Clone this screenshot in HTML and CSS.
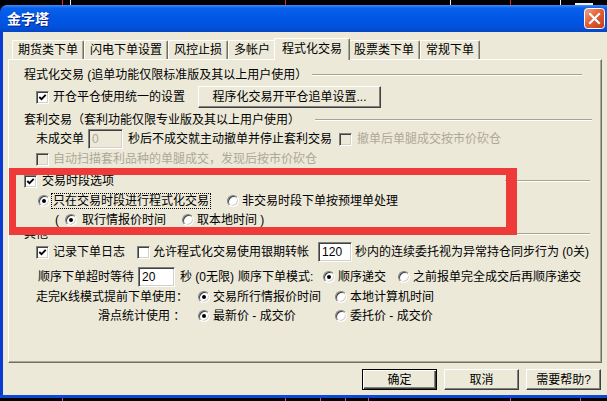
FILE: index.html
```html
<!DOCTYPE html>
<html lang="zh-CN">
<head>
    <meta charset="UTF-8">
    <title>金字塔</title>
    <link rel="stylesheet" href="styles.css">
</head>
<body>
    <div class="desk desk-top">
        <i class="mark mk-red mk-a"></i>
        <i class="mark mk-white mk-b"></i>
        <i class="mark mk-red mk-c"></i>
        <i class="mark mk-white mk-d"></i>
        <i class="mark mk-red mk-e"></i>
        <i class="mark mk-white mk-f"></i>
        <i class="bar-white"></i>
    </div>

    <div class="window">
        <div class="titlebar">
            <span class="title">金字塔</span>
            <span class="close">
                <svg width="21" height="21" viewBox="0 0 21 21">
                    <defs>
                        <linearGradient id="closeFill" x1="0" y1="0" x2="1" y2="1">
                            <stop offset="0" stop-color="#F2A98E"/>
                            <stop offset="0.45" stop-color="#E2603A"/>
                            <stop offset="1" stop-color="#C23C18"/>
                        </linearGradient>
                    </defs>
                    <rect x="0.5" y="0.5" width="20" height="20" rx="3" fill="url(#closeFill)" stroke="#fff"/>
                    <path d="M6 6 L15 15 M15 6 L6 15" stroke="#fff" stroke-width="2.2" stroke-linecap="square"/>
                </svg>
            </span>
        </div>

        <div class="client">
            <div class="tabs">
                <span class="tab">期货类下单</span>
                <span class="tab">闪电下单设置</span>
                <span class="tab">风控止损</span>
                <span class="tab">多帐户</span>
                <span class="tab active">程式化交易</span>
                <span class="tab">股票类下单</span>
                <span class="tab">常规下单</span>
            </div>

            <div class="panel">
                <!-- 程式化交易 -->
                <div class="grp r1">
                    <span>程式化交易 (追单功能仅限标准版及其以上用户使用）</span>
                    <i class="etch ml5 end19"></i>
                </div>
                <div class="row r2">
                    <span class="cb ml12"><svg width="9" height="9" viewBox="0 0 9 9"><path d="M1.3 4 L3.5 6.2 L7.7 1.8" fill="none" stroke="#000" stroke-width="1.8"/></svg></span>
                    <span class="ml4">开仓平仓使用统一的设置</span>
                    <span class="btn setup ml13">程序化交易开平仓追单设置...</span>
                </div>

                <!-- 套利交易 -->
                <div class="grp r3">
                    <span>套利交易（套利功能仅限专业版及其以上用户使用）</span>
                    <i class="etch ml15 end9"></i>
                </div>
                <div class="row r4">
                    <span class="ml12">未成交单</span>
                    <span class="field off ml4 w35">0</span>
                    <span class="ml5">秒后不成交就主动撤单并停止套利交易</span>
                    <span class="cb off ml7"></span>
                    <span class="gray ml5">撤单后单腿成交按市价砍仓</span>
                </div>
                <div class="row r5">
                    <span class="cb off ml12"></span>
                    <span class="gray ml4">自动扫描套利品种的单腿成交，发现后按市价砍仓</span>
                </div>

                <!-- 交易时段 -->
                <div class="grp r6">
                    <span class="cb"><svg width="9" height="9" viewBox="0 0 9 9"><path d="M1.3 4 L3.5 6.2 L7.7 1.8" fill="none" stroke="#000" stroke-width="1.8"/></svg></span>
                    <span class="ml5">交易时段选项</span>
                    <i class="etch late end11"></i>
                </div>
                <div class="row r7">
                    <span class="rd on ml14"></span>
                    <span class="focus ml2">只在交易时段进行程式化交易</span>
                    <span class="rd ml17"></span>
                    <span class="ml3">非交易时段下单按预埋单处理</span>
                </div>
                <div class="row r8">
                    <span class="ml31">(</span>
                    <span class="rd on ml6"></span>
                    <span class="ml5">取行情报价时间</span>
                    <span class="rd ml16"></span>
                    <span class="ml3">取本地时间 )</span>
                </div>

                <!-- 其他 -->
                <div class="grp r9">
                    <span>其他</span>
                    <i class="etch ml5 end11"></i>
                </div>
                <div class="row r10">
                    <span class="cb ml12"><svg width="9" height="9" viewBox="0 0 9 9"><path d="M1.3 4 L3.5 6.2 L7.7 1.8" fill="none" stroke="#000" stroke-width="1.8"/></svg></span>
                    <span class="ml4">记录下单日志</span>
                    <span class="cb ml12"></span>
                    <span class="ml3">允许程式化交易使用银期转帐</span>
                    <span class="field ml9 w34">120</span>
                    <span class="ml3">秒内的连续委托视为异常持仓同步行为 (0关)</span>
                </div>
                <div class="row r11">
                    <span class="ml14">顺序下单超时等待</span>
                    <span class="field ml4 w37">20</span>
                    <span class="sec ml5">秒 (0无限)</span>
                    <span class="mode">顺序下单模式:</span>
                    <span class="rd on"></span>
                    <span class="ml3">顺序递交</span>
                    <span class="rd ml12"></span>
                    <span class="ml3">之前报单完全成交后再顺序递交</span>
                </div>
                <div class="opts r12">
                    <span class="ml12">走完K线模式提前下单使用：</span>
                    <span class="opt"><span class="rd on"></span><span class="ml3">交易所行情报价时间</span></span>
                    <span class="opt"><span class="rd"></span><span class="ml3">本地计算机时间</span></span>
                </div>
                <div class="opts r13">
                    <span class="ml74">滑点统计使用 ：</span>
                    <span class="opt"><span class="rd on"></span><span class="ml3">最新价 - 成交价</span></span>
                    <span class="opt"><span class="rd"></span><span class="ml3">委托价 - 成交价</span></span>
                </div>

                <div class="note-box"></div>
            </div>

            <div class="actions">
                <span class="btn action default">确定</span>
                <span class="btn action">取消</span>
                <span class="btn action">需要帮助?</span>
            </div>
        </div>
        <div class="frame-bottom"></div>
    </div>

    <div class="desk desk-bottom">
        <i class="mark mk-pink mk-a"></i>
        <i class="mark mk-pink mk-c"></i>
        <i class="mark mk-pink mk-g"></i>
        <i class="mark mk-pink mk-h"></i>
        <i class="mark mk-pink mk-i"></i>
        <i class="mark mk-pink mk-e"></i>
        <i class="mark mk-pink mk-j"></i>
    </div>
</body>
</html>
```

FILE: styles.css
```css
* {
    box-sizing: border-box;
}

body {
    margin: 0;
    width: 607px;
    height: 401px;
    overflow: hidden;
    background: #000;
    font-family: "Liberation Sans", "Noto Sans CJK SC", sans-serif;
    font-size: 12px;
    line-height: 14px;
    color: #000;
}

/* chart behind the dialog */
.desk {
    position: relative;
    background: #000;
}
.desk-top {
    height: 5px;
}
.desk-bottom {
    height: 3px;
}
.mark {
    position: absolute;
    top: 0;
    width: 1px;
    height: 100%;
}
.mk-red { background: #e02828; }
.mk-white { background: #f0f0f0; }
.mk-pink { background: #d040d0; }
.mk-a { left: 62px; }
.mk-b { left: 70px; }
.mk-c { left: 285px; }
.mk-d { left: 450px; }
.mk-e { left: 510px; }
.mk-f { left: 560px; }
.mk-g { left: 320px; }
.mk-h { left: 345px; }
.mk-i { left: 368px; }
.mk-j { left: 580px; }
.bar-white {
    position: absolute;
    left: 575px;
    top: 3px;
    width: 18px;
    height: 2px;
    background: #f0f0f0;
}

/* window */
.window {
    height: 393px;
    display: flex;
    flex-direction: column;
}

.titlebar {
    height: 27px;
    display: flex;
    align-items: center;
    padding-left: 7px;
    border-radius: 7px 0 0 0;
    background: linear-gradient(#3C8EF8 0, #0B60EB 3px, #0058E6 45%, #0052DC 80%, #0446C6 100%);
}
.title {
    color: #fff;
    font-weight: bold;
    font-size: 14px;
    text-shadow: 1px 1px #0A1E8A;
}
.close {
    display: flex;
    margin-left: auto;
    margin-right: 2px;
}

.client {
    flex: 1;
    display: flex;
    flex-direction: column;
    background: #ECE9D8;
    border-left: 3px solid #0B3BD5;
    padding-left: 5px;
}
.frame-bottom {
    height: 3px;
    background: #0C47D6;
}

/* tabs */
.tabs {
    display: flex;
    align-items: flex-end;
    height: 21px;
    margin-top: 6px;
    padding-left: 4px;
}
.tab {
    height: 19px;
    padding: 0 5px;
    line-height: 18px;
    white-space: nowrap;
    border: 1px solid #fff;
    border-bottom: 0;
    border-right-color: #716F64;
    box-shadow: inset -1px 0 #ACA899;
    border-radius: 2px 2px 0 0;
}
.tab.active {
    position: relative;
    z-index: 1;
    height: 22px;
    margin: 0 -2px -1px;
    padding: 0 7px;
    line-height: 20px;
    background: #ECE9D8;
}

/* tab page */
.panel {
    position: relative;
    width: 594px;
    height: 304px;
    padding-left: 15px;
    border: 1px solid;
    border-color: #fff #716F64 #716F64 #fff;
    box-shadow: inset -1px -1px #ACA899;
}

.row,
.grp {
    display: flex;
    align-items: center;
    height: 16px;
    white-space: nowrap;
}
.opts {
    display: grid;
    grid-template-columns: 174px 137px auto;
    align-items: center;
    height: 16px;
    white-space: nowrap;
}
.opt {
    display: flex;
    align-items: center;
}

.r1 { margin-top: 7px; }
.r2 { margin-top: 3px; height: 22px; }
.r3 { margin-top: 4px; }
.r4 { margin-top: 1px; height: 20px; }
.r5 { margin-top: 2px; }
.r6 { margin-top: 6px; }
.r7 { margin-top: 4px; }
.r8 { margin-top: 3px; height: 15px; }
.r9 { margin-top: 0; height: 14px; }
.r10 { margin-top: 1px; height: 20px; }
.r11 { margin-top: 5px; height: 20px; }
.r12 { margin-top: 2px; }
.r13 { margin-top: 3px; }

.etch {
    flex: 1;
    height: 2px;
    border-top: 1px solid #A7A492;
    border-bottom: 1px solid #fff;
}
.etch.late { margin-left: 391px; }
.end19 { margin-right: 19px; }
.end11 { margin-right: 11px; }
.end9 { margin-right: 9px; }

.ml2 { margin-left: 2px; }
.ml3 { margin-left: 3px; }
.ml4 { margin-left: 4px; }
.ml5 { margin-left: 5px; }
.ml6 { margin-left: 6px; }
.ml7 { margin-left: 7px; }
.ml9 { margin-left: 9px; }
.ml12 { margin-left: 12px; }
.ml13 { margin-left: 13px; }
.ml14 { margin-left: 14px; }
.ml15 { margin-left: 15px; }
.ml16 { margin-left: 16px; }
.ml17 { margin-left: 17px; }
.ml31 { margin-left: 31px; }
.ml74 { margin-left: 74px; }

.gray {
    color: #ACA899;
}

/* controls */
.cb {
    flex: none;
    width: 13px;
    height: 13px;
    display: flex;
    align-items: center;
    justify-content: center;
    background: #fff;
    border: 1px solid;
    border-color: #808080 #fff #fff #808080;
    box-shadow: inset 1px 1px #404040, inset -1px -1px #D4D0C8;
}
.cb.off {
    background: #ECE9D8;
}
.cb svg {
    display: block;
}

.rd {
    position: relative;
    flex: none;
    width: 12px;
    height: 12px;
    border-radius: 50%;
    background: #fff;
    border: 1px solid;
    border-color: #808080 #fff #fff #808080;
    box-shadow: inset 1px 1px #404040, inset -1px -1px #D4D0C8;
}
.rd.on::after {
    content: "";
    position: absolute;
    left: 3px;
    top: 3px;
    width: 4px;
    height: 4px;
    border-radius: 50%;
    background: #000;
}

.focus {
    padding: 0 1px;
    outline: 1px dotted #000;
}

.field {
    flex: none;
    height: 20px;
    padding: 0 3px;
    line-height: 18px;
    background: #fff;
    border: 1px solid;
    border-color: #808080 #fff #fff #808080;
    box-shadow: inset 1px 1px #404040, inset -1px -1px #D4D0C8;
}
.field.off {
    background: #ECE9D8;
    color: #ACA899;
}
.w34 { width: 34px; }
.w35 { width: 35px; }
.w37 { width: 37px; }

.sec {
    width: 58px;
}
.mode {
    width: 85px;
}

.btn {
    flex: none;
    display: flex;
    align-items: center;
    justify-content: center;
    background: #ECE9D8;
    border: 1px solid;
    border-color: #fff #404040 #404040 #fff;
    box-shadow: inset -1px -1px #808080;
}
.btn.setup {
    width: 183px;
    height: 22px;
}

/* annotation drawn over the page */
.note-box {
    position: absolute;
    left: 0;
    top: 108px;
    width: 508px;
    height: 67px;
    border: solid #EF3A3A;
    border-width: 7px 11px 8px 7px;
}

/* dialog buttons */
.actions {
    display: flex;
    justify-content: flex-end;
    gap: 7px;
    margin-top: 6px;
    padding-right: 6px;
}
.btn.action {
    width: 75px;
    height: 21px;
}
.btn.default {
    border-color: #000;
    box-shadow: inset 1px 1px #fff, inset -1px -1px #404040, inset -2px -2px #808080;
}
```
